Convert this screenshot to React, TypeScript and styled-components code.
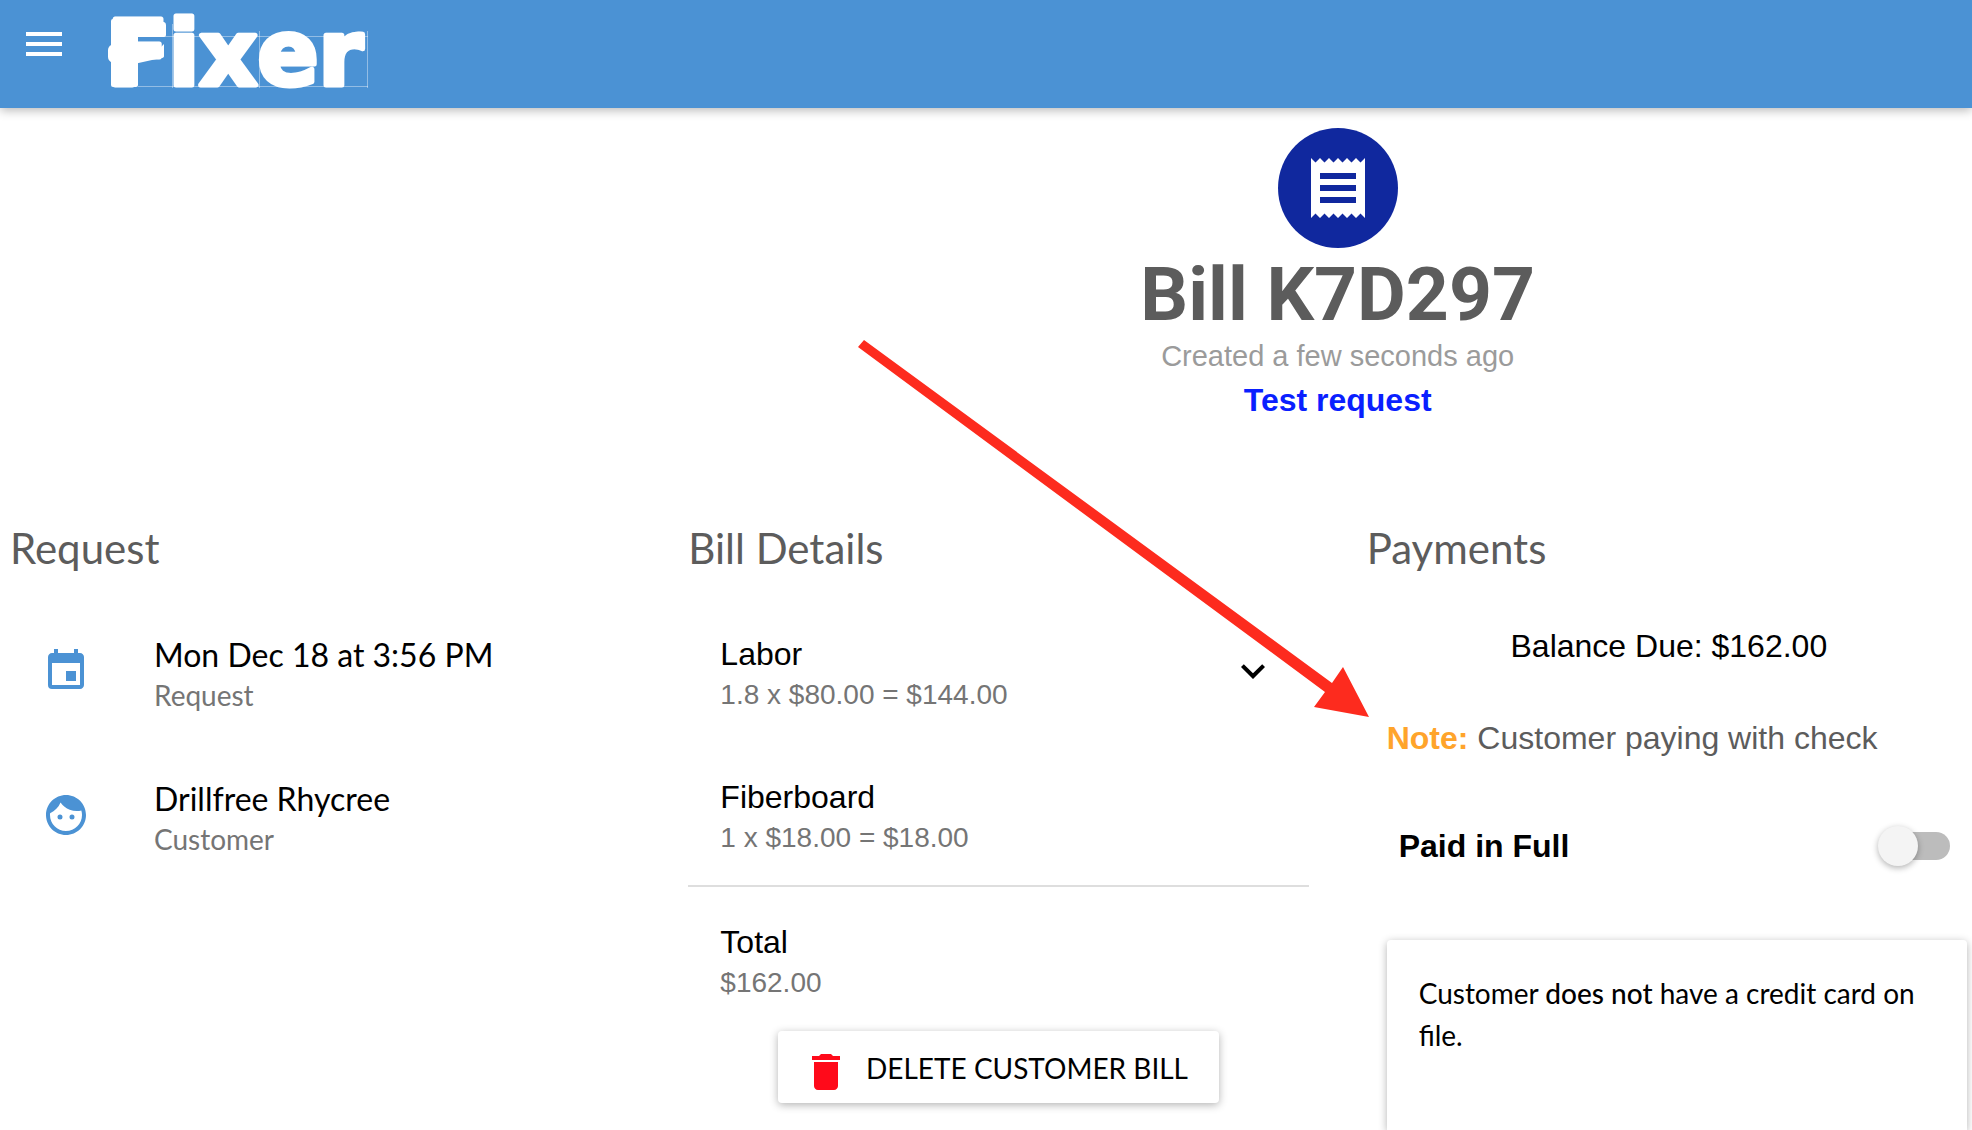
import React from "react";
import styled, { createGlobalStyle } from "styled-components";
import {
  MdDelete,
  MdEvent,
  MdExpandMore,
  MdFace,
  MdMenu,
  MdReceipt,
} from "react-icons/md";

const sans = `"Liberation Sans", Arial, Helvetica, sans-serif`;
const lato = `Lato, "Open Sans", sans-serif`;

const color = {
  primary: "#4b92d4",
  badge: "#10289e",
  heading: "#5c5c5c",
  muted: "#757575",
  faint: "#9b9b9b",
  link: "#0a1fff",
  note: "#ffa42b",
  danger: "#ff0a1a",
  arrow: "#fd2b1e",
  line: "#dedede",
};

const GlobalStyle = createGlobalStyle`
  *, *::before, *::after { box-sizing: border-box; }
  body {
    margin: 0;
    background: #fff;
    color: #000;
    font-family: ${lato};
  }
  h1, h2, p, ul { margin: 0; padding: 0; font-weight: 400; }
  button { font: inherit; color: inherit; border: 0; background: none; padding: 0; cursor: pointer; }
`;

const Page = styled.div`
  min-height: 100vh;
  display: flex;
  flex-direction: column;
`;

const TopBar = styled.header`
  display: flex;
  align-items: flex-start;
  gap: 36px;
  height: 108px;
  padding: 0 20px;
  background: ${color.primary};
  color: #fff;
  box-shadow: 0 2px 10px rgba(0, 0, 0, 0.3);
`;

const IconButton = styled.button`
  display: flex;
  font-size: 48px;
`;

const MenuButton = styled(IconButton)`
  margin-top: 20px;
`;

const LogoArt = styled.svg`
  width: 272px;
  height: 108px;
`;

const LogoText = styled.text`
  font: 700 90px "DejaVu Sans", sans-serif;
  fill: #fff;
  stroke: #fff;
  stroke-width: 5px;
  stroke-linejoin: round;
`;

const Columns = styled.main`
  flex: 1;
  display: grid;
  grid-template-columns: 31fr 31fr 30fr;
  grid-template-rows: auto 1fr;
  column-gap: 58px;
  row-gap: 102px;
  padding: 20px 5px 0 10px;
`;

const Hero = styled.div`
  grid-column: 2 / 4;
  display: flex;
  flex-direction: column;
  align-items: center;
  padding-left: 20px;
  font-family: ${sans};
`;

const Badge = styled.div`
  display: flex;
  align-items: center;
  justify-content: center;
  width: 120px;
  height: 120px;
  border-radius: 50%;
  background: ${color.badge};
  color: #fff;
  font-size: 72px;
`;

const BillTitle = styled.h1`
  margin-top: 6px;
  font: 700 75px/80px Roboto, sans-serif;
  color: ${color.heading};
`;

const Created = styled.p`
  font-size: 29px;
  line-height: 44px;
  color: ${color.faint};
`;

const RequestLink = styled.a`
  font-size: 32px;
  line-height: 44px;
  font-weight: 700;
  color: ${color.link};
  text-decoration: none;
`;

const Section = styled.section`
  position: relative;
  display: flex;
  flex-direction: column;
  min-width: 0;
`;

const SectionTitle = styled.h2`
  margin-bottom: 27px;
  font-size: 42px;
  line-height: 48px;
  color: ${color.heading};
`;

const List = styled.ul`
  list-style: none;
`;

const Row = styled.li<{ $divided?: boolean }>`
  display: flex;
  align-items: center;
  height: 144px;
  padding: 0 32px;
  border-bottom: ${(p) => (p.$divided ? `2px solid ${color.line}` : "0")};
`;

const RowIcon = styled.span`
  display: flex;
  margin-right: 64px;
  font-size: 48px;
  color: ${color.primary};
`;

const RowText = styled.div<{ $font: string }>`
  flex: 1;
  padding-top: 8px;
  font-family: ${(p) => p.$font};
`;

const RowTitle = styled.p`
  font-size: 32px;
  line-height: 40px;
`;

const RowNote = styled.p<{ $tall?: boolean }>`
  font-size: 28px;
  line-height: ${(p) => (p.$tall ? "42px" : "40px")};
  color: ${color.muted};
`;

const DeleteButton = styled.button`
  align-self: center;
  display: flex;
  align-items: center;
  gap: 16px;
  padding: 13px 31px 11px 24px;
  border-radius: 4px;
  background: #fff;
  box-shadow: 0 2px 8px rgba(0, 0, 0, 0.3);
  font-size: 28px;
  line-height: 48px;
  white-space: nowrap;

  svg {
    margin-top: 4px;
    margin-bottom: -4px;
    font-size: 48px;
    color: ${color.danger};
  }
`;

const Balance = styled.p`
  margin: 27px 0 52px;
  padding-left: 4px;
  text-align: center;
  font: 32px/40px ${sans};
`;

const PaymentNote = styled.p`
  padding-left: 20px;
  font: 32px/40px ${sans};
  color: ${color.heading};

  strong {
    color: ${color.note};
  }
`;

const PaidRow = styled.div`
  display: flex;
  align-items: center;
  justify-content: space-between;
  height: 96px;
  margin: 40px 0 46px;
  padding: 0 17px 0 32px;
`;

const PaidLabel = styled.label`
  font: 700 32px/40px ${sans};
`;

const Toggle = styled.input`
  appearance: none;
  position: relative;
  width: 68px;
  height: 28px;
  margin: 0;
  border-radius: 14px;
  background: #bcbcbc;
  cursor: pointer;

  &::before {
    content: "";
    position: absolute;
    top: -6px;
    left: -4px;
    width: 40px;
    height: 40px;
    border-radius: 50%;
    background: #f4f4f4;
    box-shadow: 0 2px 6px rgba(0, 0, 0, 0.3);
  }

  &:checked::before {
    left: 32px;
  }
`;

const Card = styled.div`
  flex: 1;
  min-height: 188px;
  margin-left: 20px;
  padding: 32px;
  border-radius: 4px 4px 0 0;
  background: #fff;
  box-shadow: 0 2px 8px rgba(0, 0, 0, 0.3);
  font-size: 28px;
  line-height: 42px;

  b {
    font-weight: 500;
  }
`;

/* Annotation arrow lying over the page, its tip at the payments column. */
const Pointer = styled.svg`
  position: absolute;
  top: -184px;
  right: 100%;
  width: 511px;
  height: 378px;
  margin-right: -2px;
  pointer-events: none;
`;

function Logo() {
  return (
    <LogoArt viewBox="0 0 272 108" role="img" aria-label="Fixer">
      <g stroke="#fff" strokeOpacity="0.4" fill="none">
        <path d="M34 36.500H264M34 86.500H264M68.500 24V88M155.500 31V88M263.500 31V88" />
      </g>
      <LogoText x="3" y="85">
        Fixer
      </LogoText>
      {/* clamp: shaft, left knob, upper jaw, toothed lower jaw */}
      <g fill="#fff">
        <rect x="7" y="19" width="27" height="68" rx="2" />
        <path d="M9 44Q4 46 4 50V57Q4 61 9 63Z" />
        <path d="M9 19Q22 18 34 18.500L60 22Q62 22.500 62 25V35Q62 37 60 37H20Z" />
        <path d="M30 44l3 2 3-2 3 3 3-3 3 3 3-3 3 3 3-3 3 3 3-3V56Q60 58 57 58L30 64Z" />
      </g>
    </LogoArt>
  );
}

const requestRows = [
  { icon: <MdEvent />, title: "Mon Dec 18 at 3:56 PM", note: "Request" },
  { icon: <MdFace />, title: "Drillfree Rhycree", note: "Customer" },
];

const billRows = [
  { title: "Labor", note: "1.8 x $80.00 = $144.00", expandable: true },
  { title: "Fiberboard", note: "1 x $18.00 = $18.00", divided: true },
  { title: "Total", note: "$162.00" },
];

export default function App() {
  return (
    <Page>
      <GlobalStyle />
      <TopBar>
        <MenuButton type="button" aria-label="Menu">
          <MdMenu />
        </MenuButton>
        <Logo />
      </TopBar>

      <Columns>
        <Hero>
          <Badge>
            <MdReceipt />
          </Badge>
          <BillTitle>Bill K7D297</BillTitle>
          <Created>Created a few seconds ago</Created>
          <RequestLink href="#request">Test request</RequestLink>
        </Hero>

        <Section id="request">
          <SectionTitle>Request</SectionTitle>
          <List>
            {requestRows.map((row) => (
              <Row key={row.title}>
                <RowIcon>{row.icon}</RowIcon>
                <RowText $font={lato}>
                  <RowTitle>{row.title}</RowTitle>
                  <RowNote>{row.note}</RowNote>
                </RowText>
              </Row>
            ))}
          </List>
        </Section>

        <Section>
          <SectionTitle>Bill Details</SectionTitle>
          <List>
            {billRows.map((row) => (
              <Row key={row.title} $divided={row.divided}>
                <RowText $font={sans}>
                  <RowTitle>{row.title}</RowTitle>
                  <RowNote $tall>{row.note}</RowNote>
                </RowText>
                {row.expandable && (
                  <IconButton type="button" aria-label="Expand labor">
                    <MdExpandMore />
                  </IconButton>
                )}
              </Row>
            ))}
          </List>
          <DeleteButton type="button">
            <MdDelete />
            DELETE CUSTOMER BILL
          </DeleteButton>
        </Section>

        <Section>
          <SectionTitle>Payments</SectionTitle>
          <Balance>Balance Due: $162.00</Balance>
          <PaymentNote>
            <strong>Note:</strong> Customer paying with check
          </PaymentNote>
          <PaidRow>
            <PaidLabel htmlFor="paid-in-full">Paid in Full</PaidLabel>
            <Toggle id="paid-in-full" type="checkbox" role="switch" />
          </PaidRow>
          <Card>
            Customer <b>does not</b> have a credit card on file.
          </Card>
          <Pointer viewBox="0 0 511 378" aria-hidden="true">
            <path
              fill={color.arrow}
              d="M0 7L6 0L474 343L485 327L511 377L456 367L467 352Z"
            />
          </Pointer>
        </Section>
      </Columns>
    </Page>
  );
}
